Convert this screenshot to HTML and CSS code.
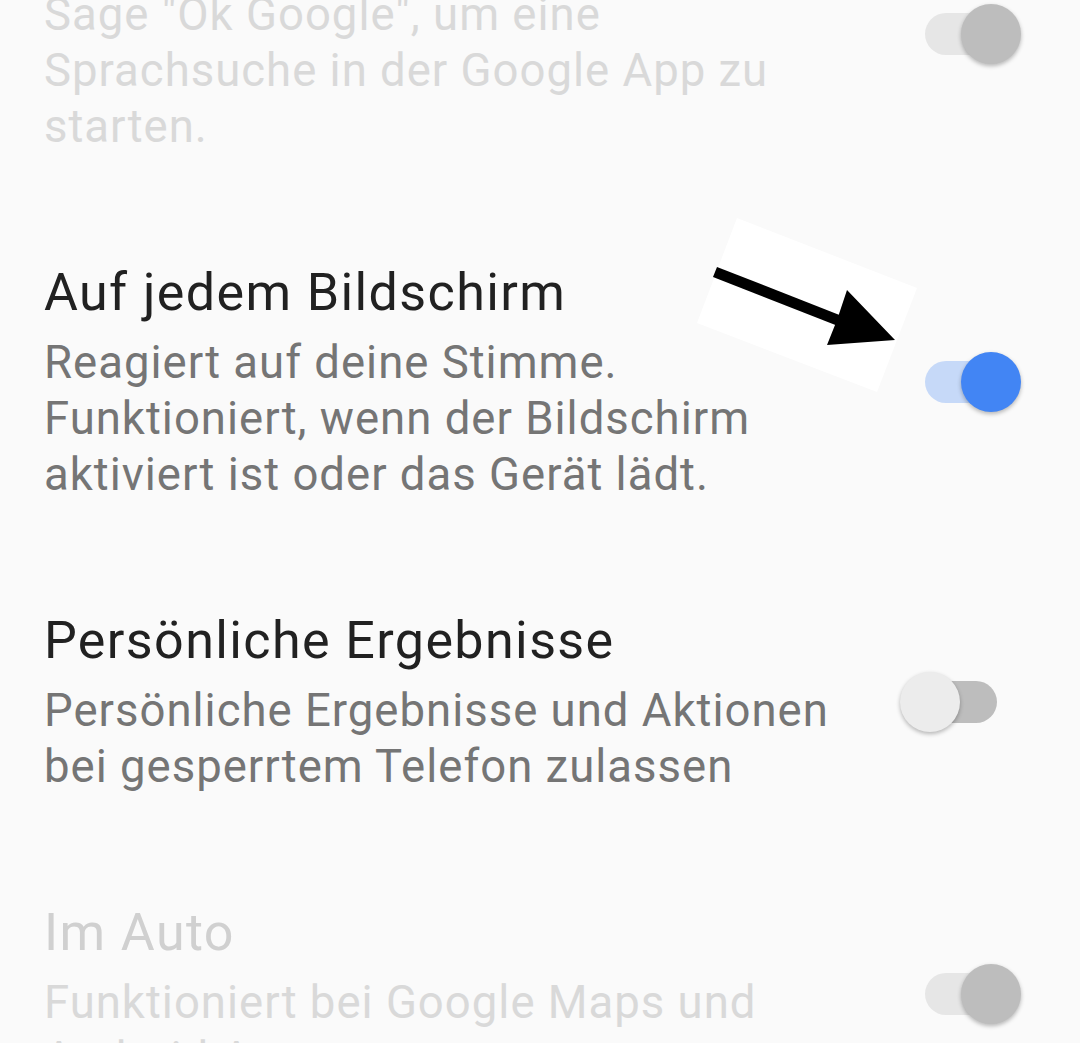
FILE: index.html
```html
<!DOCTYPE html>
<html lang="de">
<head>
    <meta charset="UTF-8">
    <meta name="viewport" content="width=device-width, initial-scale=1.0">
    <title>Voice Match</title>
    <link rel="stylesheet" href="styles.css">
</head>
<body>
    <div class="list">
        <div class="item disabled">
            <div class="text">
                <div class="title">Zugriff mit Voice Match</div>
                <div class="summary">Sage "Ok Google", um eine Sprachsuche in der Google App zu starten.</div>
            </div>
            <div class="switch on"><span class="track"></span><span class="thumb"></span></div>
        </div>

        <div class="item">
            <div class="text">
                <div class="title">Auf jedem Bildschirm</div>
                <div class="summary">Reagiert auf deine Stimme.<br>Funktioniert, wenn der Bildschirm aktiviert ist oder das Gerät lädt.</div>
            </div>
            <div class="switch on"><span class="track"></span><span class="thumb"></span></div>
        </div>

        <div class="item">
            <div class="text">
                <div class="title">Persönliche Ergebnisse</div>
                <div class="summary">Persönliche Ergebnisse und Aktionen bei gesperrtem Telefon zulassen</div>
            </div>
            <div class="switch"><span class="track"></span><span class="thumb"></span></div>
        </div>

        <div class="item disabled">
            <div class="text">
                <div class="title">Im Auto</div>
                <div class="summary">Funktioniert bei Google Maps und Android Auto</div>
            </div>
            <div class="switch on"><span class="track"></span><span class="thumb"></span></div>
        </div>
    </div>

    <!-- annotation arrow pointing at the switch -->
    <svg class="arrow" width="240" height="190" viewBox="0 0 240 190">
        <polygon points="47,8 227,78 187,182 7,113" fill="#ffffff"/>
        <line x1="25" y1="62" x2="150" y2="111" stroke="#000" stroke-width="11"/>
        <polygon points="157,80 205,130 137,135 147,110" fill="#000"/>
    </svg>
</body>
</html>
```

FILE: styles.css
```css
body {
    margin: 0;
    background-color: #fafafa;
    font-family: Roboto, "Noto Sans", sans-serif;
    overflow: hidden;
    position: relative;
    height: 1043px;
}
.list {
    margin-top: -140px;
}
.item {
    display: flex;
    align-items: center;
    justify-content: space-between;
    padding: 53px 59px 53px 44px;
}
.text {
    width: 820px;
}
.title {
    font-size: 52px;
    line-height: 64px;
    letter-spacing: 1.4px;
    color: #212121;
}
.summary {
    margin-top: 10px;
    font-size: 45.5px;
    line-height: 56px;
    letter-spacing: 1px;
    color: #757575;
}
.disabled .title {
    color: #d0d0d0;
}
.disabled .summary {
    color: #d9d9d9;
}
.switch {
    position: relative;
    width: 121px;
    height: 60px;
    display: flex;
    align-items: center;
    flex-shrink: 0;
}
.track {
    display: block;
    margin-left: 25px;
    width: 72px;
    height: 42px;
    border-radius: 21px;
    background-color: #bdbdbd;
}
.thumb {
    position: absolute;
    left: 0;
    top: 0;
    width: 60px;
    height: 60px;
    border-radius: 50%;
    background-color: #ececec;
    box-shadow: 0 2px 4px rgba(0, 0, 0, 0.28);
}
.switch.on .track {
    background-color: #c6d9f8;
}
.switch.on .thumb {
    left: 61px;
    background-color: #4285f4;
}
.disabled .switch.on .track {
    background-color: #e6e6e6;
}
.disabled .switch.on .thumb {
    background-color: #bdbdbd;
}
.arrow {
    position: absolute;
    left: 690px;
    top: 210px;
}
```
